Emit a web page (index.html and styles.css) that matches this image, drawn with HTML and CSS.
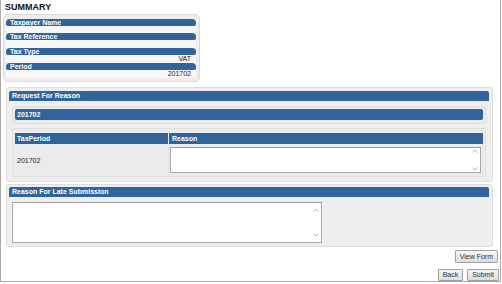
FILE: index.html
```html
<!DOCTYPE html>
<html>
<head>
<meta charset="utf-8">
<link rel="stylesheet" href="styles.css">
</head>
<body>
<div class="frame">
  <div class="title">SUMMARY</div>
  <div class="summary">
    <div class="sbar">Taxpayer Name</div>
    <div class="srow first"></div>
    <div class="sbar">Tax Reference</div>
    <div class="srow"></div>
    <div class="sbar">Tax Type</div>
    <div class="srow">VAT</div>
    <div class="sbar">Period</div>
    <div class="srow">201702</div>
  </div>

  <div class="panel p1">
    <div class="hbar">Request For Reason</div>
    <div class="inner">
      <div class="hbar sub">201702</div>
    </div>
    <div class="inner tbl">
      <div class="thead">
        <div class="th c1">TaxPeriod</div>
        <div class="th c2">Reason</div>
      </div>
      <div class="trow">
        <div class="td c1">201702</div>
        <div class="td c2">
          <div class="ta-wrap reason">
            <textarea class="ta"></textarea>
            <svg class="chev" width="8" height="26" viewBox="0 0 8 26"><path d="M1.5 5.5 L4 3 L6.5 5.5" fill="none" stroke="#b4b4b4" stroke-width="1"/><path d="M1.5 20.5 L4 23 L6.5 20.5" fill="none" stroke="#b4b4b4" stroke-width="1"/></svg>
          </div>
        </div>
      </div>
    </div>
  </div>

  <div class="panel p2">
    <div class="hbar">Reason For Late Submission</div>
    <div class="ta-wrap late">
      <textarea class="ta"></textarea>
      <svg class="chev" width="8" height="41" viewBox="0 0 8 41"><path d="M1.5 9.5 L4 7 L6.5 9.5" fill="none" stroke="#b4b4b4" stroke-width="1"/><path d="M1.5 31.5 L4 34 L6.5 31.5" fill="none" stroke="#b4b4b4" stroke-width="1"/></svg>
    </div>
  </div>

  <div class="btnrow r1"><button class="btn">View Form</button></div>
  <div class="btnrow r2"><button class="btn">Back</button><button class="btn">Submit</button></div>
</div>
</body>
</html>
```

FILE: styles.css
```css
* { box-sizing: border-box; }
html, body { margin: 0; padding: 0; background: #fff; }
body { font-family: "Liberation Sans", Arial, sans-serif; color: #222; }

.frame {
  width: 501px;
  height: 282px;
  border: 1px solid #a9a9a9;
  border-top: none;
  background: #fff;
}

.title {
  font-size: 9px;
  font-weight: bold;
  line-height: 10px;
  padding: 2px 0 0 4px;
  color: #111;
  height: 14px;
}

.summary {
  margin: 0 0 0 2px;
  width: 197px;
  height: 68px;
  background: #eeeeee;
  border: 1px solid #dadada;
  border-radius: 5px;
  padding: 4px 3px 0 2px;
}

.sbar {
  height: 7px;
  background: #31649a;
  color: #fff;
  font-size: 7px;
  font-weight: bold;
  line-height: 7px;
  padding-left: 4px;
  border-radius: 4px 4px 2px 2px;
  white-space: nowrap;
  overflow: hidden;
}

.srow {
  height: 8px;
  font-size: 7px;
  line-height: 8px;
  text-align: right;
  padding-right: 5px;
  color: #222;
  background: #f6f6f6;
}
.srow.first { height: 7px; }

.panel {
  margin-left: 5px;
  width: 487px;
  background: #eeeeee;
  border: 1px solid #dddddd;
  border-radius: 3px;
  padding: 3px 3px 0 2px;
}
.p1 { margin-top: 5px; height: 95px; }
.p2 { margin-top: 2px; height: 63px; padding-top: 2px; }

.hbar {
  height: 10px;
  background: #31649a;
  color: #fff;
  font-size: 7px;
  font-weight: bold;
  line-height: 10px;
  padding-left: 3px;
  border-radius: 2px 2px 0 0;
  white-space: nowrap;
}
.hbar.sub { height: 11px; line-height: 11px; padding-left: 2px; border-radius: 2px; }

.inner {
  margin: 5px 3px 0 3px;
  border: 1px solid #e0e0e0;
  background: #ebebeb;
  border-radius: 2px;
  padding: 2px 2px 3px 2px;
}
.inner.tbl { margin-top: 4px; padding: 4px 2px 3px 2px; }

.thead { display: flex; height: 11px; }
.th {
  background: #31649a;
  color: #fff;
  font-size: 7px;
  font-weight: bold;
  line-height: 11px;
  padding-left: 2px;
}
.th.c1 { width: 154px; border-right: 1px solid #e8e8e8; }
.th.c2 { flex: 1; padding-left: 3px; }

.trow { display: flex; height: 29px; }
.td.c1 {
  width: 154px;
  font-size: 7px;
  line-height: 29px;
  padding-left: 2px;
  border-right: 1px solid #e2e2e2;
  padding-top: 2px;
}
.td.c2 { flex: 1; padding: 3px 1px 0 1px; }

.ta-wrap { position: relative; }
.ta {
  display: block;
  resize: none;
  overflow: hidden;
  border: 1px solid #a8a8a8;
  border-top-color: #9a9a9a;
  background: #fff;
  margin: 0;
  padding: 0;
  width: 100%;
  font-family: "Liberation Sans", Arial, sans-serif;
  font-size: 7px;
}
.reason .ta { height: 26px; }
.reason { width: 311px; }
.late { margin: 5px 0 0 3px; width: 310px; }
.late .ta { height: 41px; }

.chev { position: absolute; right: 2px; top: 0; }

.btnrow { display: flex; justify-content: flex-end; gap: 4px; padding-right: 2px; }
.btnrow.r1 { margin-top: 3px; padding-right: 2px; }
.btnrow.r2 { margin-top: 6px; padding-right: 1px; }

.btn {
  font-family: "Liberation Sans", Arial, sans-serif;
  font-size: 7px;
  color: #333;
  height: 13px;
  line-height: 11px;
  padding: 0 4px;
  margin: 0;
  border: 1px solid #a0a0a0;
  border-radius: 1px;
  background: linear-gradient(#f6f6f6, #dddddd);
}
.r2 .btn { height: 12px; line-height: 10px; }
```
